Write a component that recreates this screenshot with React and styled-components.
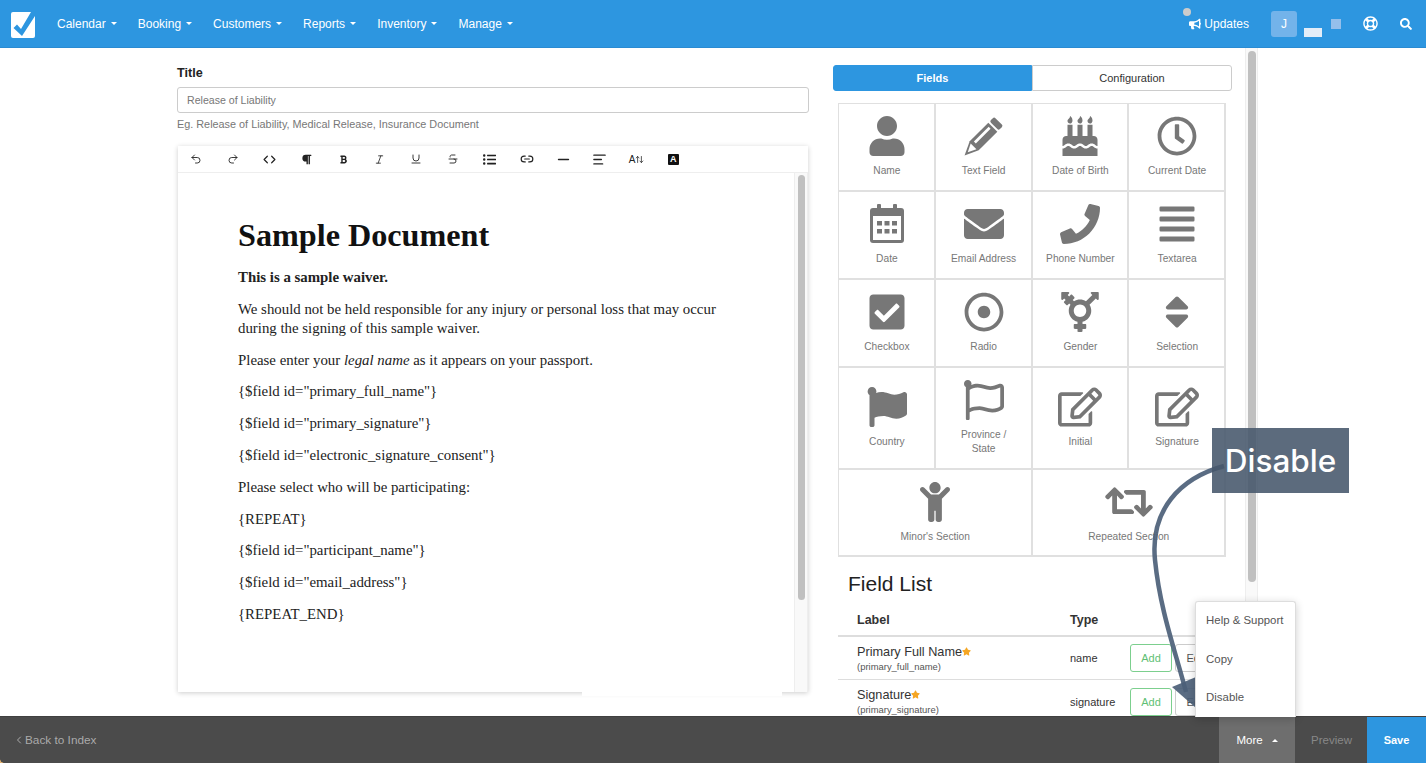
import React from 'react';
import styled, { createGlobalStyle } from 'styled-components';
import {
  FaUser, FaBirthdayCake, FaRegClock, FaEnvelope, FaPhone,
  FaAlignJustify, FaCheckSquare, FaRegDotCircle, FaTransgenderAlt, FaSort, FaFlag, FaRegFlag,
  FaRegEdit, FaChild, FaRetweet, FaBullhorn, FaRegLifeRing, FaSearch, FaStar, FaParagraph, FaListUl, FaBold,
} from 'react-icons/fa';
import {
  Undo2, Redo2, Code, Italic, Underline, Strikethrough, Link2, Minus, AlignLeft, ChevronLeft, ArrowUpDown,
} from 'lucide-react';

const PencilIcon = () => (
  <svg width="1em" height="1em" viewBox="1 -5 44 44" fill="currentColor">
    <g transform="rotate(45 20 20)">
      <rect x="13" y="-7" width="14" height="7" rx="2" />
      <path d="M13 2 H27 V31 L20 46 L13 31 Z" />
      <rect x="16.5" y="5" width="3" height="23" fill="#fff" />
      <path d="M15.5 32 H24.5 L20 41 Z" fill="#fff" />
    </g>
  </svg>
);

const CalendarIcon = () => (
  <svg width="1em" height="1em" viewBox="0 0 40 40" fill="currentColor">
    <rect x="3" y="4" width="34" height="35" rx="3" />
    <rect x="6" y="12" width="28" height="24" fill="#fff" />
    <rect x="10" y="0" width="4" height="9" rx="1" />
    <rect x="26" y="0" width="4" height="9" rx="1" />
    {[17, 25].map((y) =>
      [10, 17.5, 25].map((x) => <rect key={`${x}-${y}`} x={x} y={y} width="5" height="4.5" />)
    )}
  </svg>
);

const navItems = ['Calendar', 'Booking', 'Customers', 'Reports', 'Inventory', 'Manage'];

const fields = [
  { label: 'Name', icon: FaUser },
  { label: 'Text Field', icon: PencilIcon },
  { label: 'Date of Birth', icon: FaBirthdayCake },
  { label: 'Current Date', icon: FaRegClock },
  { label: 'Date', icon: CalendarIcon },
  { label: 'Email Address', icon: FaEnvelope },
  { label: 'Phone Number', icon: FaPhone },
  { label: 'Textarea', icon: FaAlignJustify },
  { label: 'Checkbox', icon: FaCheckSquare },
  { label: 'Radio', icon: FaRegDotCircle },
  { label: 'Gender', icon: FaTransgenderAlt },
  { label: 'Selection', icon: FaSort },
  { label: 'Country', icon: FaFlag },
  { label: 'Province / State', icon: FaRegFlag },
  { label: 'Initial', icon: FaRegEdit, size: 44 },
  { label: 'Signature', icon: FaRegEdit, size: 44 },
  { label: "Minor's Section", icon: FaChild, wide: true },
  { label: 'Repeated Section', icon: FaRetweet, wide: true, size: 48 },
];

const tools = [
  { icon: Undo2, size: 12 },
  { icon: Redo2, size: 12 },
  { icon: Code, size: 13, weight: 2.2 },
  { icon: FaParagraph, size: 11 },
  { icon: FaBold, size: 9 },
  { icon: Italic, size: 11 },
  { icon: Underline, size: 12 },
  { icon: Strikethrough, size: 12 },
  { icon: FaListUl, size: 13 },
  { icon: Link2, size: 14, weight: 2 },
  { icon: Minus, size: 17, weight: 2 },
  { icon: AlignLeft, size: 15, weight: 2.2 },
];

const GlobalStyle = createGlobalStyle`
  html, body {
    margin: 0;
    padding: 0;
    height: 100%;
    overflow: hidden;
    background: #fff;
    font-family: "Liberation Sans", Arial, sans-serif;
  }
  * { box-sizing: border-box; }
`;

const Page = styled.div`
  position: relative;
  display: flex;
  flex-direction: column;
  height: 763px;
  overflow: hidden;
`;

const NavBar = styled.header`
  display: flex;
  align-items: center;
  flex: 0 0 48px;
  padding-left: 11px;
  border-bottom: 1px solid #2a8bd2;
  background: #2d96e0;
  color: #fff;
`;

const Logo = styled.svg`
  width: 24px;
  height: 26px;
  margin: 3px 22px 0 0;
`;

const NavItem = styled.span`
  display: flex;
  align-items: center;
  gap: 5px;
  margin-right: 21px;
  font-size: 12px;
`;

const Caret = styled.i`
  width: 0;
  height: 0;
  border-left: 3px solid transparent;
  border-right: 3px solid transparent;
  border-${(p) => (p.$up ? 'bottom' : 'top')}: 3px solid currentColor;
`;

const NavRight = styled.div`
  display: flex;
  align-items: center;
  margin-left: auto;
  height: 100%;
`;

const Updates = styled.span`
  position: relative;
  display: flex;
  align-items: center;
  gap: 3px;
  margin-right: 22px;
  font-size: 12px;
`;

const UpdateDot = styled.i`
  position: absolute;
  left: -6px;
  top: -9px;
  width: 8px;
  height: 8px;
  border-radius: 50%;
  background: #ccc;
`;

const Avatar = styled.span`
  display: flex;
  align-items: center;
  justify-content: center;
  width: 26px;
  height: 26px;
  margin-right: 7px;
  border-radius: 3px;
  background: #73b3ea;
  font-size: 12px;
`;

const Redacted = styled.i`
  width: 18px;
  height: 9px;
  margin: 18px 9px 0 0;
  background: #e3edf8;
`;

const RedactedSquare = styled.i`
  width: 10px;
  height: 10px;
  margin-right: 22px;
  background: #94bfeb;
`;

const NavIcon = styled.span`
  display: flex;
  margin-right: ${(p) => p.$gap}px;
  font-size: ${(p) => p.$size}px;
`;

const Main = styled.main`
  display: flex;
  flex: 1;
  min-height: 0;
  padding-left: 177px;
`;

const LeftColumn = styled.section`
  flex: 0 0 632px;
  margin-right: 24px;
  padding-top: 18px;
`;

const TitleLabel = styled.label`
  display: block;
  margin-bottom: 6px;
  color: #222;
  font-size: 12.6px;
  font-weight: 700;
  line-height: 15px;
`;

const TitleInput = styled.div`
  display: flex;
  align-items: center;
  height: 26px;
  padding-left: 9px;
  border: 1px solid #ccc;
  border-radius: 3px;
  color: #777;
  font-size: 10.6px;
`;

const Help = styled.p`
  margin: 5px 0 15px;
  color: #777;
  font-size: 10.85px;
  line-height: 13px;
`;

const Editor = styled.div`
  position: relative;
  display: flex;
  flex-direction: column;
  height: 546px;
  margin: 0 1px;
  box-shadow: 0 1px 5px rgba(0, 0, 0, 0.2);
`;

const Toolbar = styled.div`
  display: flex;
  align-items: center;
  flex: 0 0 27px;
  border-bottom: 1px solid #eee;
  color: #222;
`;

const Tool = styled.span`
  display: flex;
  align-items: center;
  justify-content: center;
  width: 36.7px;
`;

const TextSize = styled.span`
  display: flex;
  align-items: center;
  font-size: 10px;
`;

const InvertedA = styled.span`
  display: flex;
  align-items: center;
  justify-content: center;
  width: 11px;
  height: 11px;
  border-radius: 1px;
  background: #111;
  color: #fff;
  font-size: 9px;
  font-weight: 700;
`;

const EditorBody = styled.div`
  display: flex;
  flex: 1;
  min-height: 0;
`;

const Doc = styled.article`
  flex: 1;
  padding: 44px 60px 0;
  color: #222;
  font-family: "Liberation Serif", "Times New Roman", serif;
  font-size: 14.85px;
  line-height: 19px;
`;

const DocTitle = styled.h1`
  margin: 0 0 15px;
  color: #111;
  font-size: 32.2px;
  line-height: 36px;
  font-weight: 700;
`;

const DocLine = styled.p`
  margin: 0 0 12.8px;
`;

const Track = styled.div`
  flex: 0 0 ${(p) => p.$width}px;
  padding: ${(p) => p.$top}px ${(p) => p.$inset}px 0;
  border-left: 1px solid #eee;
  background: #f9f9f9;
  box-shadow: inset -1px 0 #eee;
`;

const Thumb = styled.div`
  height: ${(p) => p.$height}px;
  border-radius: 4px;
  background: #c0c0c0;
`;

const CoverPatch = styled.i`
  position: absolute;
  left: 404px;
  bottom: -4px;
  width: 200px;
  height: 4px;
  background: #fff;
`;

const RightColumn = styled.section`
  flex: 0 0 399px;
  margin-right: 13px;
  padding-top: 17px;
  overflow: hidden;
`;

const Tabs = styled.div`
  display: flex;
  height: 26px;
  margin-bottom: 12px;
`;

const Tab = styled.button`
  flex: ${(p) => (p.$active ? '0 0 199px' : 1)};
  padding: 0;
  border: 1px solid ${(p) => (p.$active ? '#2d96e0' : '#ccc')};
  border-radius: ${(p) => (p.$active ? '3px 0 0 3px' : '0 3px 3px 0')};
  background: ${(p) => (p.$active ? '#2d96e0' : '#fff')};
  color: ${(p) => (p.$active ? '#fff' : '#333')};
  font-family: inherit;
  font-size: 11px;
  font-weight: ${(p) => (p.$active ? 700 : 400)};
`;

const FieldGrid = styled.div`
  display: grid;
  grid-template-columns: repeat(4, 1fr);
  grid-template-rows: 88px 88px 88px 102px 87px;
  width: 388px;
  margin-left: 5px;
  border-top: 1px solid #e0e0e0;
  border-left: 1px solid #e0e0e0;
`;

const FieldCell = styled.div`
  display: flex;
  flex-direction: column;
  align-items: center;
  justify-content: center;
  padding-left: 1px;
  grid-column: span ${(p) => (p.$wide ? 2 : 1)};
  border-right: 2px solid #e0e0e0;
  border-bottom: 2px solid #e0e0e0;
  color: #777;
`;

const FieldIcon = styled.span`
  display: flex;
  align-items: center;
  justify-content: center;
  height: 40px;
  margin-bottom: 8px;
  font-size: ${(p) => p.$size || 40}px;
`;

const FieldName = styled.span`
  max-width: ${(p) => (p.$wide ? 'none' : '70px')};
  color: #777;
  font-size: 10.2px;
  line-height: 14px;
  text-align: center;
`;

const ListTitle = styled.h2`
  margin: 15px 0 15px 15px;
  color: #222;
  font-size: 21px;
  font-weight: 400;
  line-height: 24px;
`;

const Row = styled.div`
  display: grid;
  grid-template-columns: 213px 60px 1fr;
  align-items: center;
  width: 388px;
  height: ${(p) => p.$height}px;
  margin-left: 5px;
  padding-left: 19px;
  padding-bottom: ${(p) => (p.$head ? '7px' : '0')};
  border-bottom: ${(p) => (p.$head ? '2px solid #ddd' : '1px solid #ddd')};
  color: #333;
  font-size: ${(p) => (p.$head ? '12.5px' : '11px')};
  font-weight: ${(p) => (p.$head ? 700 : 400)};
`;

const NameCell = styled.div`
  font-size: 12.7px;
  line-height: 15px;
`;

const Key = styled.div`
  margin-top: 1px;
  color: #555;
  font-size: 9.45px;
  line-height: 11px;
`;

const Actions = styled.div`
  display: flex;
  gap: 3px;
`;

const ActionButton = styled.span`
  display: flex;
  align-items: center;
  justify-content: center;
  width: 42px;
  height: 28px;
  border: 1px solid ${(p) => (p.$green ? '#7ccf8e' : '#ccc')};
  border-radius: 3px;
  color: ${(p) => (p.$green ? '#5fbf75' : '#555')};
  font-size: 11px;
`;

const Footer = styled.footer`
  position: relative;
  z-index: 3;
  display: flex;
  align-items: stretch;
  flex: 0 0 47px;
  padding-left: 13px;
  border-top: 1px solid #404040;
  background:
    radial-gradient(circle at 4px 0, #4b4b4b 3.5px, #e0b070 4px) no-repeat left bottom / 4px 4px,
    #4b4b4b;
  font-size: 11.5px;
`;

const BackLink = styled.span`
  display: flex;
  align-items: center;
  margin-right: auto;
  color: #aaa;
  font-size: 11.8px;
`;

const MoreButton = styled.div`
  position: relative;
  display: flex;
  align-items: center;
  justify-content: center;
  gap: 9px;
  width: 76px;
  margin-right: 16px;
  background: #6e6e6e;
  color: #fff;
`;

const Menu = styled.div`
  position: absolute;
  right: -1px;
  bottom: 100%;
  display: flex;
  flex-direction: column;
  width: 101px;
  height: 116px;
  padding-left: 10px;
  border: 1px solid #ddd;
  border-bottom: 0;
  border-radius: 3px 3px 0 0;
  background: #fff;
  box-shadow: 0 2px 8px rgba(0, 0, 0, 0.2);
`;

const MenuItem = styled.span`
  display: flex;
  align-items: center;
  flex: 0 0 38.5px;
  color: #555;
  font-size: 11.4px;
  &:first-child { margin-top: -1px; }
`;

const PreviewButton = styled.span`
  display: flex;
  align-items: center;
  margin-right: 15px;
  color: #888;
`;

const SaveButton = styled.span`
  display: flex;
  align-items: center;
  justify-content: center;
  width: 59px;
  background: #2d96e0;
  color: #fff;
  font-weight: 700;
  font-size: 11px;
`;

const ArrowLayer = styled.svg`
  position: absolute;
  left: 0;
  top: 0;
  z-index: 2;
  width: 1426px;
  height: 763px;
  pointer-events: none;
`;

const Callout = styled.div`
  position: absolute;
  left: 1212px;
  top: 428px;
  z-index: 2;
  display: flex;
  align-items: center;
  justify-content: center;
  width: 137px;
  height: 65px;
  background: rgba(70, 86, 107, 0.88);
  color: #fff;
  font-family: Inter, sans-serif;
  font-size: 31.5px;
  font-weight: 500;
`;

const App = () => {
  return (
    <Page>
      <GlobalStyle />
      <NavBar>
        <Logo viewBox="0 0 24 26">
          <rect width="24" height="26" rx="2" fill="#fff" />
          <path d="M2.5 16 L6 12.5 L10 17 L20 0 L24 0 L24 4 L11 24 Z" fill="#2d96e0" />
        </Logo>
        {navItems.map((item) => (
          <NavItem key={item}>
            {item}
            <Caret />
          </NavItem>
        ))}
        <NavRight>
          <Updates>
            <UpdateDot />
            <FaBullhorn size={12} />
            Updates
          </Updates>
          <Avatar>J</Avatar>
          <Redacted />
          <RedactedSquare />
          <NavIcon $size={15} $gap={22}><FaRegLifeRing /></NavIcon>
          <NavIcon $size={12} $gap={14}><FaSearch /></NavIcon>
        </NavRight>
      </NavBar>

      <Main>
        <LeftColumn>
          <TitleLabel>Title</TitleLabel>
          <TitleInput>Release of Liability</TitleInput>
          <Help>Eg. Release of Liability, Medical Release, Insurance Document</Help>
          <Editor>
            <Toolbar>
              {tools.map(({ icon: Icon, size, weight }, i) => (
                <Tool key={i}><Icon size={size} strokeWidth={weight || 1.8} /></Tool>
              ))}
              <Tool><TextSize>A<ArrowUpDown size={9} /></TextSize></Tool>
              <Tool><InvertedA>A</InvertedA></Tool>
            </Toolbar>
            <EditorBody>
              <Doc>
                <DocTitle>Sample Document</DocTitle>
                <DocLine><b>This is a sample waiver.</b></DocLine>
                <DocLine>We should not be held responsible for any injury or personal loss that may occur during the signing of this sample waiver.</DocLine>
                <DocLine>Please enter your <i>legal name</i> as it appears on your passport.</DocLine>
                <DocLine>{'{$field id="primary_full_name"}'}</DocLine>
                <DocLine>{'{$field id="primary_signature"}'}</DocLine>
                <DocLine>{'{$field id="electronic_signature_consent"}'}</DocLine>
                <DocLine>Please select who will be participating:</DocLine>
                <DocLine>{'{REPEAT}'}</DocLine>
                <DocLine>{'{$field id="participant_name"}'}</DocLine>
                <DocLine>{'{$field id="email_address"}'}</DocLine>
                <DocLine>{'{REPEAT_END}'}</DocLine>
              </Doc>
              <Track $width={14} $inset={3} $top={2}>
                <Thumb $height={425} />
              </Track>
            </EditorBody>
            <CoverPatch />
          </Editor>
        </LeftColumn>

        <RightColumn>
          <Tabs>
            <Tab $active>Fields</Tab>
            <Tab>Configuration</Tab>
          </Tabs>
          <FieldGrid>
            {fields.map(({ label, icon: Icon, wide, size }) => (
              <FieldCell key={label} $wide={wide}>
                <FieldIcon $size={size}><Icon /></FieldIcon>
                <FieldName $wide={wide}>{label}</FieldName>
              </FieldCell>
            ))}
          </FieldGrid>
          <ListTitle>Field List</ListTitle>
          <Row $head $height={26}>
            <span>Label</span>
            <span>Type</span>
          </Row>
          <Row $height={43}>
            <NameCell>
              Primary Full Name<FaStar size={9} color="#f5a623" />
              <Key>(primary_full_name)</Key>
            </NameCell>
            <span>name</span>
            <Actions>
              <ActionButton $green>Add</ActionButton>
              <ActionButton>Edit</ActionButton>
            </Actions>
          </Row>
          <Row $height={44}>
            <NameCell>
              Signature<FaStar size={9} color="#f5a623" />
              <Key>(primary_signature)</Key>
            </NameCell>
            <span>signature</span>
            <Actions>
              <ActionButton $green>Add</ActionButton>
              <ActionButton>Edit</ActionButton>
            </Actions>
          </Row>
        </RightColumn>

        <Track $width={13} $inset={2} $top={3}>
          <Thumb $height={531} />
        </Track>
      </Main>

      <ArrowLayer viewBox="0 0 1426 763">
        <path d="M1224 466 C1180 478 1150 510 1155 560 C1160 610 1175 650 1186 692" fill="none" stroke="#4c6078" strokeWidth="4.5" opacity="0.92" />
        <path d="M1172 687 L1196 677 L1196 708 Z" fill="#4c6078" opacity="0.92" />
      </ArrowLayer>
      <Callout>Disable</Callout>

      <Footer>
        <BackLink><ChevronLeft size={12} />Back to Index</BackLink>
        <MoreButton>
          More
          <Caret $up />
          <Menu>
            <MenuItem>Help &amp; Support</MenuItem>
            <MenuItem>Copy</MenuItem>
            <MenuItem>Disable</MenuItem>
          </Menu>
        </MoreButton>
        <PreviewButton>Preview</PreviewButton>
        <SaveButton>Save</SaveButton>
      </Footer>
    </Page>
  );
};

export default App;
